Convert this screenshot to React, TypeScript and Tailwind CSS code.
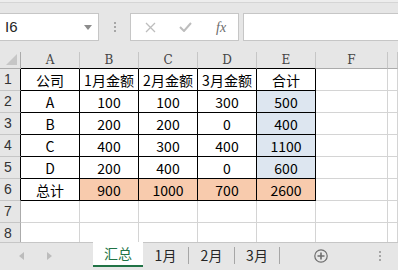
const FONT = { fontFamily: '"Noto Sans CJK SC", "Liberation Sans", sans-serif' };

const cols = [
  { k: "A", w: "w-[59px]" },
  { k: "B", w: "w-[59px]" },
  { k: "C", w: "w-[59px]" },
  { k: "D", w: "w-[59px]" },
  { k: "E", w: "w-[59px]" },
  { k: "F", w: "w-[72px]" },
  { k: "", w: "flex-1" },
];

const data = [
  ["公司", "1月金额", "2月金额", "3月金额", "合计"],
  ["A", "100", "100", "300", "500"],
  ["B", "200", "200", "0", "400"],
  ["C", "400", "300", "400", "1100"],
  ["D", "200", "400", "0", "600"],
  ["总计", "900", "1000", "700", "2600"],
];

function fill(r: number, c: number) {
  if (r === 5 && c >= 1) return "bg-[#f8cbad]";
  if (r >= 1 && r <= 4 && c === 4) return "bg-[#dde6f0]";
  return "bg-white";
}

function FormulaBar() {
  return (
    <div className="h-[52px] bg-[#e6e6e6]">
      <div className="h-[3px] border-b border-[#d5d5d5] bg-[#ededed]" />
      <div className="mt-[10px] flex h-[28px] items-stretch">
        <div className="relative flex w-[99px] items-center border border-l-0 border-[#c6c6c6] bg-white pl-[5px]">
          <span className="text-[15px] text-[#262626]" style={{ fontFamily: '"Liberation Sans", sans-serif' }}>I6</span>
          <svg className="absolute right-[6px] top-[11px]" width="8" height="5" viewBox="0 0 8 5">
            <path d="M0 0 L8 0 L4 5 Z" fill="#8c8c8c" />
          </svg>
        </div>
        <div className="flex w-[31px] flex-col items-center justify-center gap-[2px]">
          <span className="h-[2px] w-[2px] bg-[#a6a6a6]" />
          <span className="h-[2px] w-[2px] bg-[#a6a6a6]" />
          <span className="h-[2px] w-[2px] bg-[#a6a6a6]" />
        </div>
        <div className="flex w-[109px] items-center border border-[#c6c6c6] bg-white">
          <svg className="ml-[14px]" width="11" height="11" viewBox="0 0 11 11">
            <path d="M1 1 L10 10 M10 1 L1 10" stroke="#bdbdbd" strokeWidth="1.3" />
          </svg>
          <svg className="ml-[23px]" width="13" height="10" viewBox="0 0 13 10">
            <path d="M1 5 L5 9 L12 1" stroke="#bdbdbd" strokeWidth="2" fill="none" />
          </svg>
          <span
            className="ml-[24px] text-[14px] italic text-[#6b6b6b]"
            style={{ fontFamily: '"Liberation Serif", serif' }}
          >
            fx
          </span>
        </div>
        <div className="ml-[4px] flex-1 border border-r-0 border-[#c6c6c6] bg-white" />
      </div>
    </div>
  );
}

function Grid() {
  const hdr = { fontFamily: '"DejaVu Serif", "Liberation Serif", serif' };
  return (
    <div className="h-[190px] overflow-hidden bg-white" style={FONT}>
      <div className="flex h-[17px] bg-[#e6e6e6]">
        <div className="relative w-[21px] border-r border-b border-[#ababab]">
          <svg className="absolute right-[3px] bottom-[3px]" width="11" height="11" viewBox="0 0 11 11">
            <path d="M11 0 L11 11 L0 11 Z" fill="#c6c6c6" />
          </svg>
        </div>
        {cols.map((c, i) => (
          <div
            key={i}
            className={`${c.w} flex items-center justify-center border-r border-b border-r-[#c6c6c6] text-[12px] leading-none text-[#444] ${
              i < 5 ? "border-b-black" : "border-b-[#ababab]"
            }`}
            style={hdr}
          >
            {c.k}
          </div>
        ))}
      </div>
      {Array.from({ length: 8 }).map((_, r) => (
        <div key={r} className="flex h-[22px]">
          <div
            className={`flex w-[21px] items-center border-b border-r border-b-[#c6c6c6] bg-[#e6e6e6] pl-[4px] text-[14px] text-[#333] ${
              r < 6 ? "border-r-black" : "border-r-[#ababab]"
            }`}
            style={{ fontFamily: '"Liberation Sans", sans-serif' }}
          >
            {r + 1}
          </div>
          {cols.map((c, i) => {
            const inTable = r < 6 && i < 5;
            return (
              <div
                key={i}
                className={`${c.w} flex items-center justify-center border-r border-b text-[14px] leading-none text-black ${
                  inTable ? `border-black ${fill(r, i)}` : "border-[#d4d4d4] bg-white"
                }`}
              >
                {inTable ? data[r][i] : ""}
              </div>
            );
          })}
        </div>
      ))}
    </div>
  );
}

function Tabs() {
  const sep = <span className="h-[17px] w-px bg-[#a6a6a6]" />;
  return (
    <div className="flex h-[28px] border-t border-[#c6c6c6] bg-[#e6e6e6] text-[14px]" style={FONT}>
      <div className="flex w-[93px] items-center pb-[2px]">
        <svg className="ml-[19px]" width="5" height="8" viewBox="0 0 5 8">
          <path d="M5 0 L5 8 L0 4 Z" fill="#bcbcbc" />
        </svg>
        <svg className="ml-[23px]" width="5" height="8" viewBox="0 0 5 8">
          <path d="M0 0 L0 8 L5 4 Z" fill="#bcbcbc" />
        </svg>
      </div>
      <div className="-mt-px flex h-[25px] w-[50px] items-center justify-center border-b-2 border-[#217346] bg-white text-[#217346]">
        汇总
      </div>
      <div className="flex h-[24px] items-center text-[#262626]">
        <span className="w-[45px] text-center">1月</span>
        {sep}
        <span className="w-[45px] text-center">2月</span>
        {sep}
        <span className="w-[44px] text-center">3月</span>
        {sep}
      </div>
      <div className="flex h-[26px] w-[82px] items-center justify-center">
        <svg width="14" height="14" viewBox="0 0 14 14">
          <circle cx="7" cy="7" r="6.2" stroke="#6e6e6e" strokeWidth="1.2" fill="none" />
          <path d="M7 3.5 V10.5 M3.5 7 H10.5" stroke="#6e6e6e" strokeWidth="1.6" />
        </svg>
      </div>
      <div className="flex flex-1 flex-col items-center justify-center gap-[2px] pb-[2px]">
        <span className="h-[2px] w-[2px] bg-[#a6a6a6]" />
        <span className="h-[2px] w-[2px] bg-[#a6a6a6]" />
        <span className="h-[2px] w-[2px] bg-[#a6a6a6]" />
      </div>
    </div>
  );
}

export default function App() {
  return (
    <div className="h-[270px] w-[398px] overflow-hidden bg-[#e6e6e6]">
      <FormulaBar />
      <Grid />
      <Tabs />
    </div>
  );
}
